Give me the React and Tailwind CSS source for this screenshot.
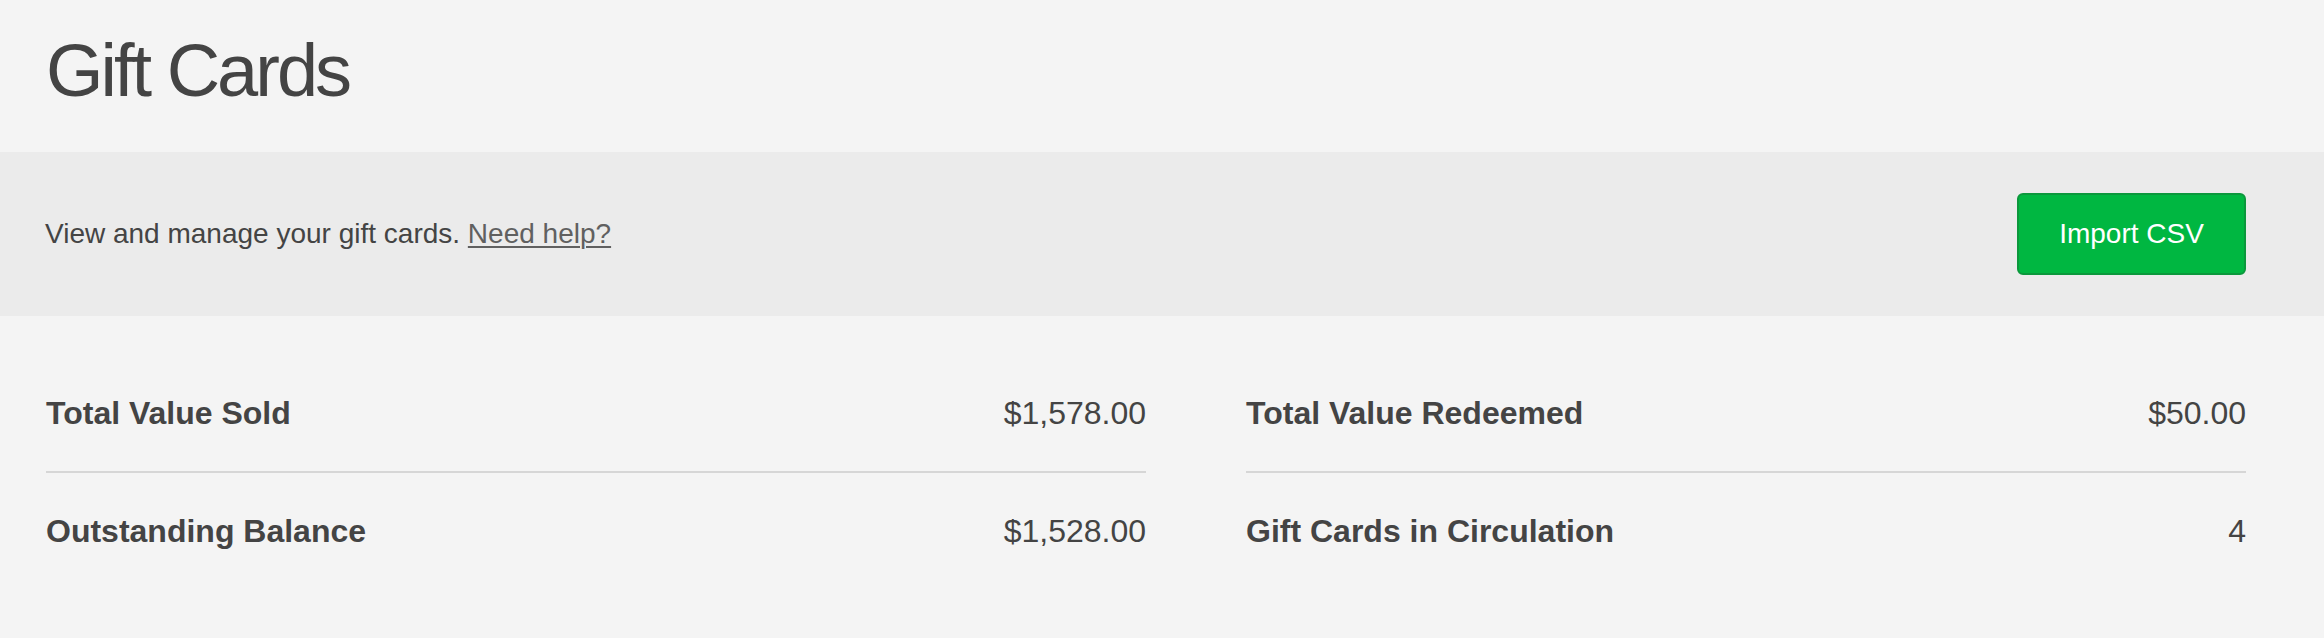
export default function App() {
  const font = { fontFamily: '"Liberation Sans", Arial, sans-serif' };
  return (
    <div className="min-h-[638px] w-full bg-[#f4f4f4] text-[#444444] font-['Liberation_Sans',Arial,sans-serif]">
      <div className="h-[152px] pl-[46px] pt-[34px]">
        <h1 className="text-[74px] leading-[74px] font-normal tracking-[-3px] text-[#444444]">Gift Cards</h1>
      </div>
      <div className="h-[164px] bg-[#ebebeb] pl-[45px] pr-[78px] flex items-center justify-between">
        <p className="text-[28px] text-[#444444]">
          View and manage your gift cards.{" "}
          <a href="#" className="text-[#606060] underline underline-offset-[3px] decoration-[2px]">Need help?</a>
        </p>
        <button className="w-[229px] h-[82px] rounded-[6px] border-2 border-[#0b983c] bg-[#00b741] text-white text-[28px]">
          Import CSV
        </button>
      </div>
      <div className="pl-[46px] pr-[78px] pt-[39px] grid grid-cols-2">
        <div className="flex flex-col">
          <div className="flex justify-between py-[39px] border-b-2 border-[#d6d6d6] text-[32px] leading-[38px]">
            <span className="font-bold">Total Value Sold</span>
            <span>$1,578.00</span>
          </div>
          <div className="flex justify-between py-[39px] text-[32px] leading-[38px]">
            <span className="font-bold">Outstanding Balance</span>
            <span>$1,528.00</span>
          </div>
        </div>
        <div className="flex flex-col pl-[100px]">
          <div className="flex justify-between py-[39px] border-b-2 border-[#d6d6d6] text-[32px] leading-[38px]">
            <span className="font-bold">Total Value Redeemed</span>
            <span>$50.00</span>
          </div>
          <div className="flex justify-between py-[39px] text-[32px] leading-[38px]">
            <span className="font-bold">Gift Cards in Circulation</span>
            <span>4</span>
          </div>
        </div>
      </div>
    </div>
  );
}
